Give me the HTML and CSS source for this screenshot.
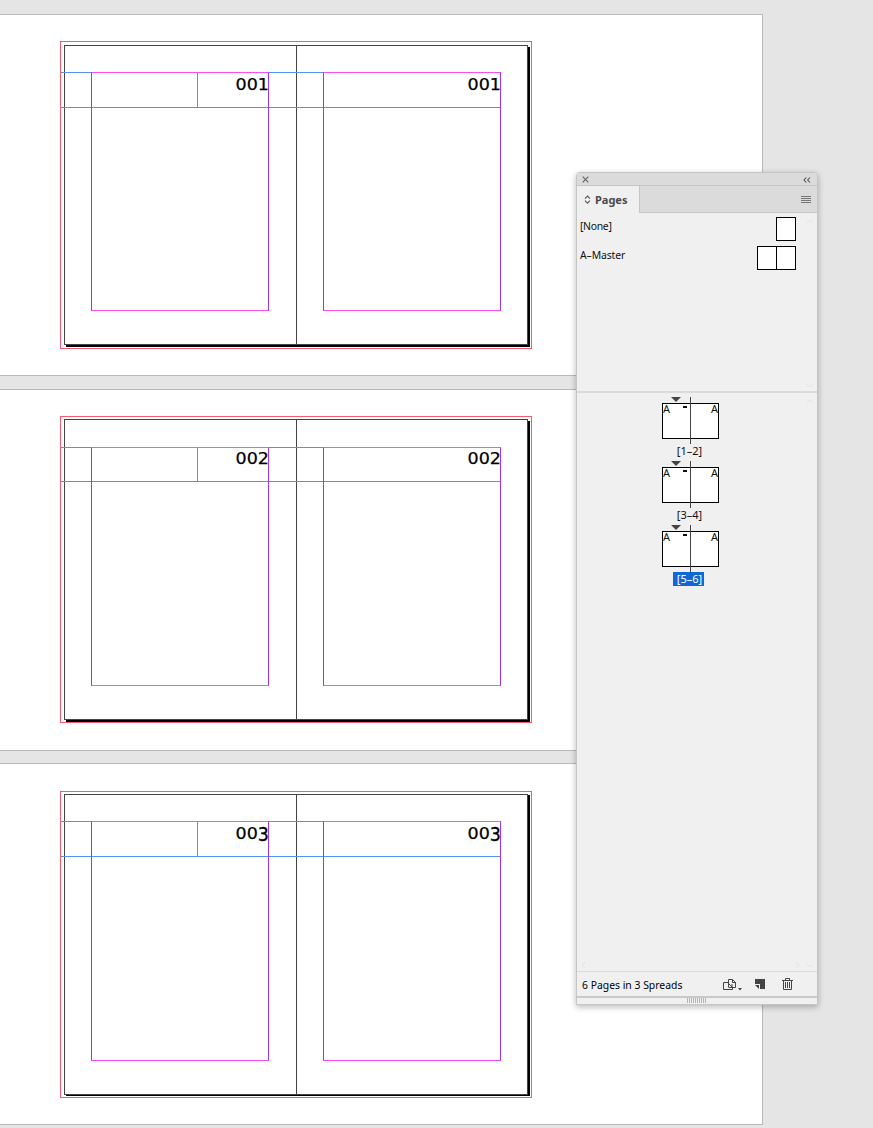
FILE: index.html
```
<!DOCTYPE html>
<html lang="en">
<head>
    <meta charset="UTF-8">
    <meta name="viewport" content="width=device-width, initial-scale=1.0">
    <title>Pages</title>
    <link rel="stylesheet" href="styles.css">
</head>
<body>
    <!-- Pasteboards -->
    <main class="canvas">
        <section class="board board-1">
            <div class="bleed">
                <div class="spread">
                    <div class="page"><div class="margins"><span class="number">001</span></div></div>
                    <div class="page"><div class="margins"><span class="number">001</span></div></div>
                </div>
                <div class="guides"></div>
            </div>
        </section>
        <section class="board board-2">
            <div class="bleed">
                <div class="spread">
                    <div class="page"><div class="margins"><span class="number">002</span></div></div>
                    <div class="page"><div class="margins"><span class="number">002</span></div></div>
                </div>
                <div class="guides"></div>
            </div>
        </section>
        <section class="board board-3">
            <div class="bleed">
                <div class="spread">
                    <div class="page"><div class="margins"><span class="number">00<span class="low">3</span></span></div></div>
                    <div class="page"><div class="margins"><span class="number">00<span class="low">3</span></span></div></div>
                </div>
                <div class="guides"></div>
            </div>
        </section>
    </main>

    <!-- Floating pages panel -->
    <aside class="panel">
        <header class="titlebar">
            <svg width="7" height="7" viewBox="0 0 7 7"><path d="M.7.7l5.6 5.6M6.3.7L.7 6.3" stroke="#666" stroke-width="1.2"/></svg>
            <svg width="8" height="6" viewBox="0 0 8 6"><path d="M3.3.5L1 3l2.3 2.5M7 .5L4.7 3 7 5.5" fill="none" stroke="#555" stroke-width="1.1"/></svg>
        </header>
        <div class="tabs">
            <div class="tab">
                <svg width="7" height="9" viewBox="0 0 7 9"><path d="M1 3.6L3.5 1 6 3.6M1 5.6l2.5 2.6L6 5.6" fill="none" stroke="#555" stroke-width="1.1"/></svg>
                <span>Pages</span>
            </div>
            <svg class="menu" width="10" height="8" viewBox="0 0 10 8"><path d="M0 .5h10M0 2.5h10M0 4.5h10M0 6.5h10" stroke="#777"/></svg>
        </div>
        <div class="masters">
            <div class="master"><span class="none">[None]</span><div class="thumb"><i></i></div></div>
            <div class="master"><span>A–Master</span><div class="thumb"><i></i><i></i></div></div>
            <svg class="arrow arrow-top" width="8" height="5" viewBox="0 0 8 5"><path d="M1 4l3-3 3 3"/></svg>
            <svg class="arrow arrow-bottom" width="8" height="5" viewBox="0 0 8 5"><path d="M1 1l3 3 3-3"/></svg>
        </div>
        <div class="document">
            <div class="item">
                <div class="pair"><span>A</span><span>A</span></div>
                <span class="range">[1–2]</span>
            </div>
            <div class="item">
                <div class="pair"><span>A</span><span>A</span></div>
                <span class="range">[3–4]</span>
            </div>
            <div class="item">
                <div class="pair"><span>A</span><span>A</span></div>
                <span class="range selected">[5–6]</span>
            </div>
            <svg class="arrow arrow-top" width="8" height="5" viewBox="0 0 8 5"><path d="M1 4l3-3 3 3"/></svg>
            <svg class="arrow arrow-left" width="5" height="8" viewBox="0 0 5 8"><path d="M4 1L1 4l3 3"/></svg>
            <svg class="arrow arrow-right" width="5" height="8" viewBox="0 0 5 8"><path d="M1 1l3 3-3 3"/></svg>
            <svg class="arrow arrow-bottom" width="8" height="5" viewBox="0 0 8 5"><path d="M1 1l3 3 3-3"/></svg>
        </div>
        <footer class="status">
            <span class="count">6 Pages in 3 Spreads</span>
            <svg class="edit" width="19" height="13" viewBox="0 0 19 13">
                <path d="M5.500 4.500h-5v7h9v-2M5.500 9V1.500h4l3 3v5H9M9.500 1.500v3h3M5 5l4 4M9 6v3.500H5.500" fill="none" stroke="#444"/>
                <path d="M15 10h4l-2 2.500z" fill="#444"/>
            </svg>
            <svg class="new" width="10" height="10" viewBox="0 0 10 10"><path d="M0 0h10v10H5V5H0z" fill="#444"/><path d="M0 6h4v4z" fill="#444"/></svg>
            <svg class="trash" width="11" height="12" viewBox="0 0 11 12"><path d="M0 2.500h11M3.500 2V.5h4V2M1.500 2.500v9h8v-9M3.500 4v6M5.500 4v6M7.500 4v6" fill="none" stroke="#444"/></svg>
        </footer>
        <div class="grip"><i></i></div>
    </aside>
</body>
</html>
```
FILE: styles.css
```
* {
    box-sizing: border-box;
}

body {
    margin: 0;
    height: 1128px;
    overflow: hidden;
    background-color: #e5e5e5;
    font-family: "Noto Sans", sans-serif;
    color: #111;
}

svg {
    display: block;
}

/* pasteboards */
.canvas {
    width: 763px;
    padding-top: 14px;
}

.board {
    height: 362px;
    padding: 26px 0 0 60px;
    border: 1px solid #b9b9b9;
    border-left: 0;
    background-color: #fff;
    margin-bottom: 13px;
    --top: 26px;
    --guide: 34px;
    --margin-height: 239px;
}

.board-2 {
    margin-bottom: 12px;
    --top: 27px;
    --guide: 33px;
}

.board-3 {
    padding-top: 27px;
    --margin-height: 240px;
}

.bleed {
    position: relative;
    width: 472px;
    height: 308px;
    padding: 3px;
    border: 1px solid #f75a6e;
}

.board-2 .bleed,
.board-3 .bleed {
    height: 307px;
    padding-top: 2px;
}

.spread {
    display: flex;
    width: 464px;
    height: 300px;
    border: 1px solid #444;
    box-shadow: 2px 2px 0 #000;
}

.board-2 .spread,
.board-3 .spread {
    height: 301px;
}

.board-3 .spread {
    box-shadow: 2px 1px 0 #000;
}

.page {
    flex: 1;
    padding: var(--top) 0 0 26px;
}

.page + .page {
    flex: 0 0 231px;
    border-left: 1px solid #444;
}

.margins {
    width: 178px;
    height: var(--margin-height);
    border: 1px solid #9a35f5;
    border-top-color: #f94ff3;
    border-bottom-color: #f94ff3;
    position: relative;
    z-index: 1;
    text-align: right;
}

.number {
    display: block;
    font: 16.5px/20px "DejaVu Sans", sans-serif;
    color: #000;
    -webkit-text-stroke: 0.25px #000;
    padding-top: 2px;
    margin-right: -1px;
    transform: scaleX(1.06);
    transform-origin: right;
}

.board-2 .number {
    padding-top: 1px;
}

/* old-style figure hangs below the baseline */
.low {
    display: inline-block;
    transform: scaleY(1.22);
    transform-origin: 0 4px;
}

/* ruler guides, drawn over the pages */
.guides {
    position: absolute;
    left: 0;
    top: 30px;
    width: 440px;
    height: calc(var(--guide) + 2px);
    border: solid #5293f0;
    border-width: 1px 0;
}

.board-3 .guides {
    top: 29px;
}

.guides::after {
    content: "";
    position: absolute;
    left: 136px;
    top: 0;
    bottom: 0;
    border-left: 1px solid #5293f0;
}

/* panel */
.panel {
    position: absolute;
    left: 576px;
    top: 172px;
    width: 242px;
    height: 833px;
    display: flex;
    flex-direction: column;
    border: 1px solid #c5c5c5;
    border-radius: 4px 4px 0 0;
    background-color: #f0f0f0;
    box-shadow: 0 2px 6px rgba(0, 0, 0, 0.28);
    font-size: 10.4px;
    z-index: 2;
}

.titlebar {
    display: flex;
    justify-content: space-between;
    align-items: center;
    height: 13px;
    padding: 1px 6px 0 5px;
    border-bottom: 1px solid #c5c5c5;
    border-radius: 3px 3px 0 0;
    background-color: #dbdbdb;
}

.tabs {
    display: flex;
    justify-content: space-between;
    height: 27px;
    background-color: #dbdbdb;
    box-shadow: inset 0 -1px #c5c5c5;
}

.tab {
    display: flex;
    align-items: center;
    gap: 4px;
    width: 63px;
    padding-left: 7px;
    border-right: 1px solid #c5c5c5;
    background-color: #f0f0f0;
    color: #4a4a4a;
    font-size: 11px;
    font-weight: bold;
}

.menu {
    margin: 10px 6px 0 0;
}

.masters {
    position: relative;
    height: 180px;
    padding: 4px 21px 0 3px;
    border-bottom: 2px solid #dbdbdb;
}

.master {
    display: flex;
    justify-content: space-between;
    height: 29px;
    line-height: 18px;
    letter-spacing: -0.1px;
}

.none {
    letter-spacing: -0.3px;
}

.thumb {
    display: flex;
    height: 24px;
}

.thumb i {
    width: 20px;
    border: 1px solid #000;
    background-color: #fff;
}

.thumb i + i {
    margin-left: -1px;
}

.document {
    position: relative;
    flex: 1;
    padding: 10px 0 0 85px;
}

.item {
    width: 57px;
    height: 64px;
    text-align: center;
}

.pair {
    position: relative;
    display: flex;
    justify-content: space-between;
    height: 36px;
    border: 1px solid #000;
    background-color: #fff;
    font-size: 11px;
    line-height: 10px;
}

/* binding line and section marker */
.pair::before {
    content: "";
    position: absolute;
    left: 27px;
    top: -7px;
    height: 47px;
    border-left: 1px solid #444;
}

.pair::after {
    content: "";
    position: absolute;
    left: 8px;
    top: -7px;
    border: solid transparent;
    border-width: 5px 5px 0;
    border-top-color: #444;
}

.pair span:first-child::after {
    content: "";
    position: absolute;
    left: 20px;
    top: 2px;
    width: 4px;
    height: 2px;
    background-color: #111;
}

.range {
    position: relative;
    display: block;
    width: 31px;
    height: 14px;
    margin: 5px 0 0 11px;
    padding-left: 2px;
    line-height: 14px;
    font-size: 11px;
}

.selected {
    background-color: #1068d6;
    color: #fff;
}

.arrow {
    position: absolute;
    fill: none;
    stroke: #e2e2e2;
}

.arrow-top {
    top: 6px;
    right: 3px;
}

.arrow-bottom {
    right: 3px;
    bottom: 3px;
}

.arrow-left {
    left: 4px;
    bottom: 2px;
}

.arrow-right {
    right: 17px;
    bottom: 2px;
}

.status {
    display: flex;
    align-items: center;
    height: 27px;
    padding: 2px 0 0 5px;
    border-top: 1px solid #dbdbdb;
    border-bottom: 2px solid #c9c9c9;
    color: #000;
}

.count {
    width: 141px;
}

.edit {
    margin-top: -1px;
}

.new {
    margin: -2px 0 0 13px;
}

.trash {
    margin: -2px 0 0 17px;
}

.grip {
    height: 6px;
    padding: 0 0 0 110px;
}

.grip i {
    display: block;
    width: 19px;
    height: 5px;
    background: repeating-linear-gradient(90deg, #b5b5b5 0 1px, transparent 1px 2px);
}
```
